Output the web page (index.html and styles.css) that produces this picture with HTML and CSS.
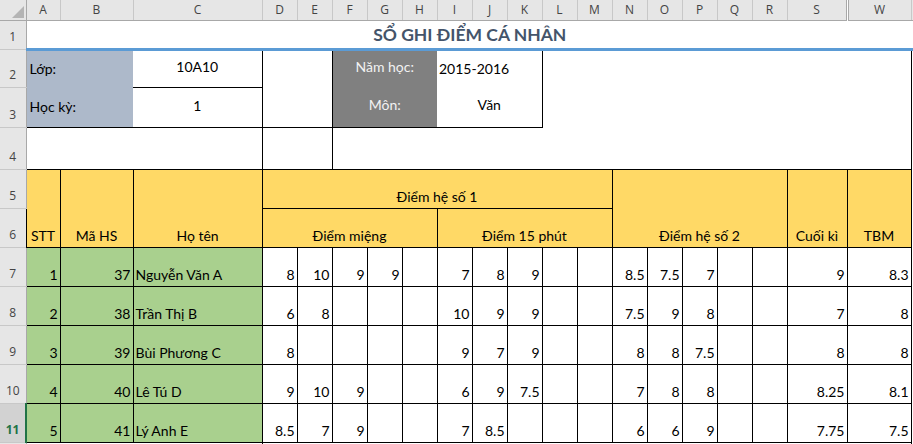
FILE: index.html
```html
<!DOCTYPE html>
<html lang="vi">
<head>
<meta charset="utf-8">
<title>Sổ ghi điểm cá nhân</title>
<link rel="stylesheet" href="styles.css">
</head>
<body>
<table class="sheet">
  <colgroup>
    <col class="w-rh"><col class="w-a"><col class="w-b"><col class="w-c">
    <col class="w-d"><col class="w-d"><col class="w-d"><col class="w-d"><col class="w-d">
    <col class="w-d"><col class="w-d"><col class="w-d"><col class="w-d"><col class="w-d">
    <col class="w-d"><col class="w-d"><col class="w-d"><col class="w-d"><col class="w-d">
    <col class="w-s"><col class="w-w"><col class="w-x">
  </colgroup>
  <tr class="h-hdr">
    <th class="corner"><svg class="tri" width="12" height="12" viewBox="0 0 12 12"><polygon points="12,0 12,12 0,12" fill="#b4b4b4"/></svg></th>
    <th class="ch">A</th><th class="ch">B</th><th class="ch">C</th>
    <th class="ch">D</th><th class="ch">E</th><th class="ch">F</th><th class="ch">G</th><th class="ch">H</th>
    <th class="ch">I</th><th class="ch">J</th><th class="ch">K</th><th class="ch">L</th><th class="ch">M</th>
    <th class="ch">N</th><th class="ch">O</th><th class="ch">P</th><th class="ch">Q</th><th class="ch">R</th>
    <th class="ch ch-hid">S</th><th class="ch">W</th><th class="ch"></th>
  </tr>
  <tr class="h1">
    <th class="rh">1</th>
    <td class="title" colspan="21">SỔ GHI ĐIỂM CÁ NHÂN</td>
  </tr>
  <tr class="h2">
    <th class="rh">2</th>
    <td class="lbl" colspan="2">Lớp:</td>
    <td class="val bb br">10A10</td>
    <td class="br bb" colspan="2" rowspan="2"></td>
    <td class="dk" colspan="3">Năm học:</td>
    <td class="mid br" colspan="3">2015-2016</td>
    <td class="br" colspan="9" rowspan="2"></td>
    <td></td>
  </tr>
  <tr class="h3">
    <th class="rh">3</th>
    <td class="lbl bb" colspan="2">Học kỳ:</td>
    <td class="val bb br">1</td>
    <td class="dk bb" colspan="3">Môn:</td>
    <td class="val bb br" colspan="3">Văn</td>
    <td></td>
  </tr>
  <tr class="h4">
    <th class="rh">4</th>
    <td class="br bb" colspan="3"></td>
    <td class="br bb" colspan="2"></td>
    <td class="br bb" colspan="15"></td>
    <td></td>
  </tr>
  <tr class="hd">
    <th class="rh">5</th>
    <td class="y" rowspan="2">STT</td>
    <td class="y" rowspan="2">Mã HS</td>
    <td class="y" rowspan="2">Họ tên</td>
    <td class="y" colspan="10">Điểm hệ số 1</td>
    <td class="y" colspan="5" rowspan="2">Điểm hệ số 2</td>
    <td class="y" rowspan="2">Cuối kì</td>
    <td class="y" rowspan="2">TBM</td>
    <td></td>
  </tr>
  <tr class="hd">
    <th class="rh">6</th>
    <td class="y" colspan="5">Điểm miệng</td>
    <td class="y" colspan="5">Điểm 15 phút</td>
    <td></td>
  </tr>
  <tr class="hd">
    <th class="rh">7</th>
    <td class="g">1</td><td class="g">37</td><td class="g nm">Nguyễn Văn A</td>
    <td class="n">8</td><td class="n">10</td><td class="n">9</td><td class="n">9</td><td class="n"></td>
    <td class="n">7</td><td class="n">8</td><td class="n">9</td><td class="n"></td><td class="n"></td>
    <td class="n">8.5</td><td class="n">7.5</td><td class="n">7</td><td class="n"></td><td class="n"></td>
    <td class="n">9</td><td class="n">8.3</td><td></td>
  </tr>
  <tr class="hd">
    <th class="rh">8</th>
    <td class="g">2</td><td class="g">38</td><td class="g nm">Trần Thị B</td>
    <td class="n">6</td><td class="n">8</td><td class="n"></td><td class="n"></td><td class="n"></td>
    <td class="n">10</td><td class="n">9</td><td class="n">9</td><td class="n"></td><td class="n"></td>
    <td class="n">7.5</td><td class="n">9</td><td class="n">8</td><td class="n"></td><td class="n"></td>
    <td class="n">7</td><td class="n">8</td><td></td>
  </tr>
  <tr class="hd">
    <th class="rh">9</th>
    <td class="g">3</td><td class="g">39</td><td class="g nm">Bùi Phương C</td>
    <td class="n">8</td><td class="n"></td><td class="n"></td><td class="n"></td><td class="n"></td>
    <td class="n">9</td><td class="n">7</td><td class="n">9</td><td class="n"></td><td class="n"></td>
    <td class="n">8</td><td class="n">8</td><td class="n">7.5</td><td class="n"></td><td class="n"></td>
    <td class="n">8</td><td class="n">8</td><td></td>
  </tr>
  <tr class="hd">
    <th class="rh">10</th>
    <td class="g">4</td><td class="g">40</td><td class="g nm">Lê Tú D</td>
    <td class="n">9</td><td class="n">10</td><td class="n">9</td><td class="n"></td><td class="n"></td>
    <td class="n">6</td><td class="n">9</td><td class="n">7.5</td><td class="n"></td><td class="n"></td>
    <td class="n">7</td><td class="n">8</td><td class="n">8</td><td class="n"></td><td class="n"></td>
    <td class="n">8.25</td><td class="n">8.1</td><td></td>
  </tr>
  <tr class="hd">
    <th class="rh sel">11</th>
    <td class="g">5</td><td class="g">41</td><td class="g nm">Lý Anh E</td>
    <td class="n">8.5</td><td class="n">7</td><td class="n">9</td><td class="n"></td><td class="n"></td>
    <td class="n">7</td><td class="n">8.5</td><td class="n"></td><td class="n"></td><td class="n"></td>
    <td class="n">6</td><td class="n">6</td><td class="n">9</td><td class="n"></td><td class="n"></td>
    <td class="n">7.75</td><td class="n">7.5</td><td></td>
  </tr>
  <tr class="hd">
    <th class="rh"></th>
    <td class="n" colspan="3"></td><td class="n" colspan="17"></td><td></td>
  </tr>
</table>
</body>
</html>
```

FILE: styles.css
```css
* { box-sizing: border-box; }
html, body { margin: 0; padding: 0; background: #ffffff; }
body {
  width: 913px;
  height: 444px;
  overflow: hidden;
  font-family: Lato, "Liberation Sans", sans-serif;
  font-size: 14px;
  color: #000000;
}
.sheet {
  border-collapse: collapse;
  table-layout: fixed;
  width: 913px;
}
.w-rh { width: 26px; }
.w-a { width: 34px; }
.w-b { width: 73px; }
.w-c { width: 129px; }
.w-d { width: 35px; }
.w-s { width: 60px; }
.w-w { width: 64px; }
.w-x { width: 2px; }

.h-hdr { height: 20px; }
.h1 { height: 29px; }
.h2 { height: 38px; }
.h3 { height: 40px; }
.h4 { height: 42px; }
.hd { height: 39px; }

.sheet td, .sheet th {
  padding: 0 2px 3px;
  vertical-align: bottom;
  white-space: nowrap;
  overflow: hidden;
  font-weight: normal;
  line-height: 16px;
}

.corner {
  background: #e6e6e6;
  border-right: 1px solid #a8a8a8;
  border-bottom: 1px solid #a8a8a8;
  text-align: right;
}
.sheet th.corner { padding: 0 2px 2px 0; }
.tri { display: block; margin-left: auto; }

.sheet th.ch {
  background: #e6e6e6;
  color: #444444;
  font-family: "Open Sans", "Liberation Sans", sans-serif;
  font-size: 12px;
  text-align: center;
  vertical-align: middle;
  padding: 0;
  border-right: 1px solid #c8c8c8;
  border-bottom: 1px solid #a8a8a8;
}
.sheet th.ch-hid { border-right: 3px double #a8a8a8; }

.sheet th.rh {
  background: #e6e6e6;
  color: #444444;
  font-family: "Open Sans", "Liberation Sans", sans-serif;
  font-size: 12px;
  text-align: center;
  padding: 0 0 4px;
  border-right: 1px solid #a8a8a8;
  border-bottom: 1px solid #c8c8c8;
}
.sheet th.sel {
  background: #d2d2d2;
  color: #217346;
  font-weight: bold;
  border-right: 2px solid #217346;
}

.sheet td.title {
  text-align: center;
  font-weight: bold;
  font-size: 17.5px;
  color: #44546a;
  border-bottom: 3px solid #5b9bd5;
  padding-bottom: 2px;
  line-height: 22px;
}

.bb { border-bottom: 1px solid #000000; }
.br { border-right: 1px solid #000000; }

.sheet td.lbl {
  background: #adb9ca;
  vertical-align: middle;
  padding: 0 3px;
}
.sheet td.val {
  text-align: center;
  vertical-align: middle;
}
.sheet td.mid {
  vertical-align: middle;
  padding: 0 2px;
}
.sheet td.dk {
  background: #808080;
  color: #f2f2f2;
  text-align: center;
  vertical-align: middle;
}

.sheet td.y {
  background: #ffd966;
  border: 1px solid #000000;
  text-align: center;
}
.sheet td.g {
  background: #a9d08e;
  border: 1px solid #000000;
  text-align: right;
}
.sheet td.nm { text-align: left; }
.sheet td.n {
  border: 1px solid #000000;
  text-align: right;
}
```
